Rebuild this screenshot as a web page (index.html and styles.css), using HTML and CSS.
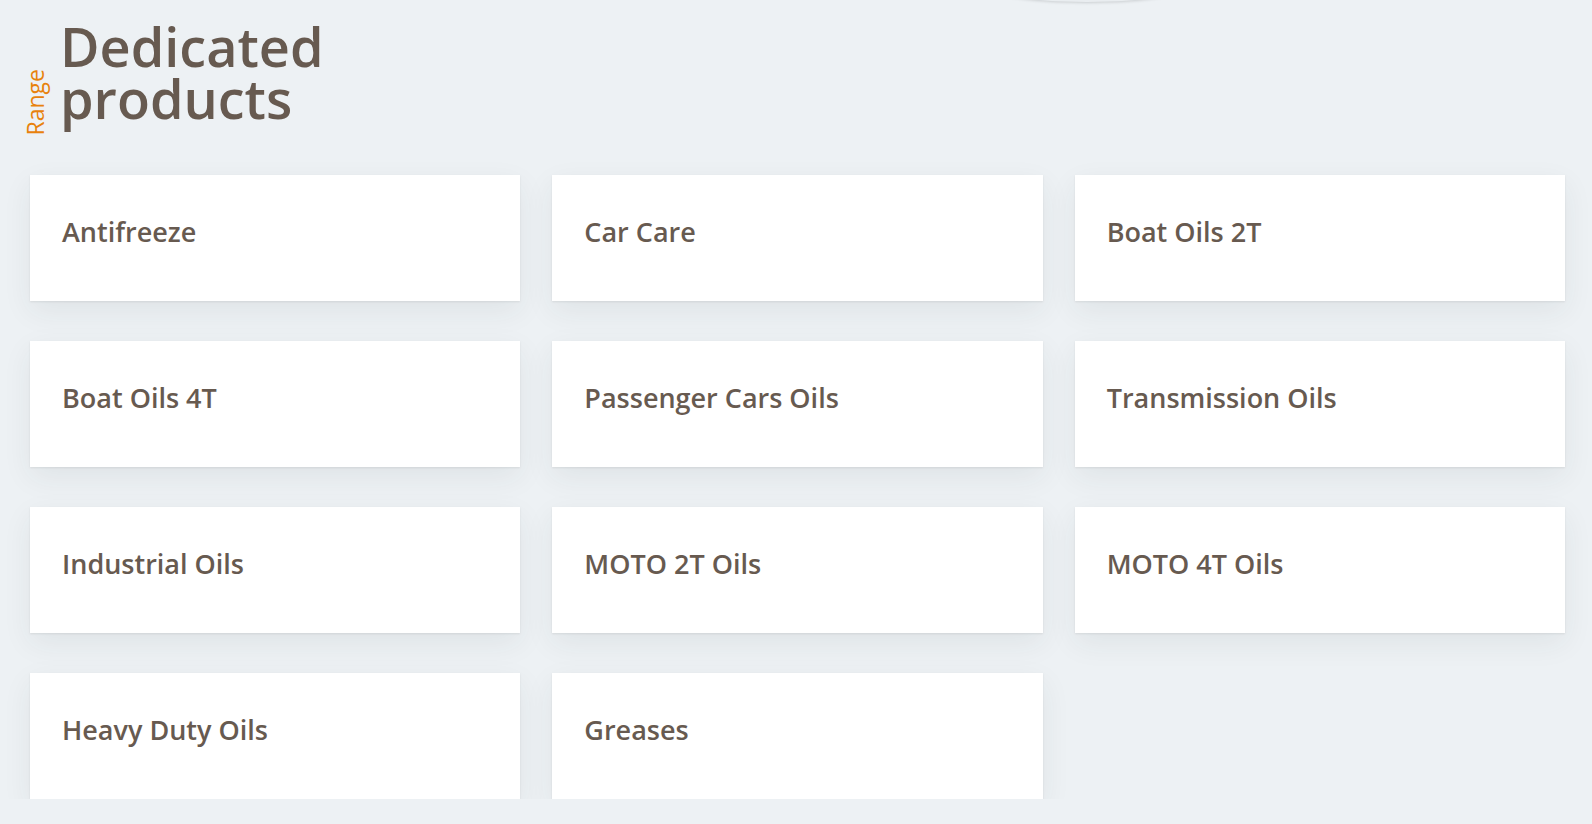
FILE: index.html
```html
<!DOCTYPE html>
<html lang="en">
<head>
  <meta charset="UTF-8">
  <title>Dedicated products</title>
  <link rel="stylesheet" href="styles.css">
</head>
<body>

<div class="top-curve"></div>

<section class="range">
  <div class="range-head">
    <span class="range-label">Range</span>
    <h2>Dedicated<br>products</h2>
  </div>

  <div class="range-grid">
    <a class="range-card" href="#">Antifreeze</a>
    <a class="range-card" href="#">Car Care</a>
    <a class="range-card" href="#">Boat Oils 2T</a>
    <a class="range-card" href="#">Boat Oils 4T</a>
    <a class="range-card" href="#">Passenger Cars Oils</a>
    <a class="range-card" href="#">Transmission Oils</a>
    <a class="range-card" href="#">Industrial Oils</a>
    <a class="range-card" href="#">MOTO 2T Oils</a>
    <a class="range-card" href="#">MOTO 4T Oils</a>
    <a class="range-card" href="#">Heavy Duty Oils</a>
    <a class="range-card" href="#">Greases</a>
  </div>
</section>

</body>
</html>
```

FILE: styles.css
```css
body {
  font-family: "Open Sans", "Liberation Sans", sans-serif;
  background: #edf1f4;
  color: #675a50;
  margin: 0;
  overflow: hidden;
}
.top-curve {
  position: absolute;
  left: 978px;
  top: -38px;
  width: 218px;
  height: 40px;
  border-radius: 50%;
  background: #e9edf0;
  box-shadow: 0 1px 3px rgba(0, 0, 0, 0.14);
}
.range {
  padding-top: 20px;
}
.range-head {
  display: flex;
  align-items: flex-end;
  gap: 13px;
  padding-left: 24px;
}
.range-label {
  writing-mode: vertical-rl;
  transform: rotate(180deg);
  font-size: 23px;
  line-height: 23px;
  color: #e8820c;
}
.range-head h2 {
  margin: 0;
  padding-bottom: 11px;
  font-size: 54px;
  line-height: 52px;
  font-weight: 600;
  color: #675a50;
}
.range-grid {
  display: grid;
  grid-template-columns: repeat(3, 1fr);
  gap: 40px 32px;
  margin: 40px 27px 0 30px;
}
.range-card {
  box-sizing: border-box;
  height: 126px;
  padding: 41px 32px 0;
  background: #fff;
  color: #675a50;
  text-decoration: none;
  font-size: 27px;
  line-height: 1.2;
  font-weight: 600;
  box-shadow: 0 1px 2px rgba(0, 0, 0, 0.08), 0 10px 28px rgba(40, 50, 60, 0.07);
}
```
